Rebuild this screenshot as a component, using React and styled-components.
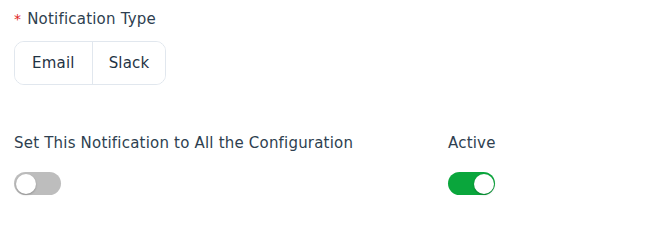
import React, { useState } from 'react';
import styled, { createGlobalStyle } from 'styled-components';

const GlobalStyle = createGlobalStyle`
  body {
    margin: 0;
    background: #ffffff;
    font-family: "DejaVu Sans", "Open Sans", sans-serif;
    color: #2e3f50;
  }
`;

const Page = styled.div`
  padding: 9px 14px 0;
  width: 650px;
  height: 220px;
  box-sizing: border-box;
`;

const Label = styled.div`
  font-size: 15px;
  letter-spacing: 0.2px;
  line-height: 20px;
  color: #2e3f50;
  display: flex;
  align-items: center;
  gap: 6px;
`;

const Required = styled.span`
  color: #e02424;
  font-size: 14px;
`;

const Segmented = styled.div`
  display: inline-flex;
  margin-top: 12px;
  height: 44px;
  border: 1px solid #e1e7ee;
  border-radius: 10px;
  box-sizing: border-box;
  overflow: hidden;
`;

const Segment = styled.button`
  border: none;
  background: #fff;
  font: inherit;
  font-size: 15px;
  letter-spacing: 0.2px;
  color: #1f3344;
  padding: 0 ${p => p.$pad}px;
  cursor: pointer;
  & + & {
    border-left: 1px solid #e1e7ee;
  }
`;

const Row = styled.div`
  display: grid;
  grid-template-columns: 434px 1fr;
  margin-top: 48px;
`;

const Field = styled.div`
  display: flex;
  flex-direction: column;
  gap: 19px;
`;

const Track = styled.button`
  position: relative;
  width: 47px;
  height: 23px;
  border: none;
  border-radius: 12px;
  padding: 0;
  background: ${p => (p.$on ? '#0aa63c' : '#bdbdbd')};
  cursor: pointer;
`;

const Knob = styled.span`
  position: absolute;
  top: 1.5px;
  left: ${p => (p.$on ? '26px' : '1.5px')};
  width: 20px;
  height: 20px;
  border-radius: 50%;
  background: #fff;
  box-shadow: 0 1px 2px rgba(0, 0, 0, 0.25);
`;

function Toggle({ on, onChange }) {
  return (
    <Track $on={on} onClick={() => onChange(!on)}>
      <Knob $on={on} />
    </Track>
  );
}

export default function App() {
  const [all, setAll] = useState(false);
  const [active, setActive] = useState(true);

  return (
    <>
      <GlobalStyle />
      <Page>
        <Label>
          <Required>*</Required>Notification Type
        </Label>
        <Segmented>
          <Segment $pad={17}>Email</Segment>
          <Segment $pad={16}>Slack</Segment>
        </Segmented>
        <Row>
          <Field>
            <Label>Set This Notification to All the Configuration</Label>
            <Toggle on={all} onChange={setAll} />
          </Field>
          <Field>
            <Label>Active</Label>
            <Toggle on={active} onChange={setActive} />
          </Field>
        </Row>
      </Page>
    </>
  );
}
